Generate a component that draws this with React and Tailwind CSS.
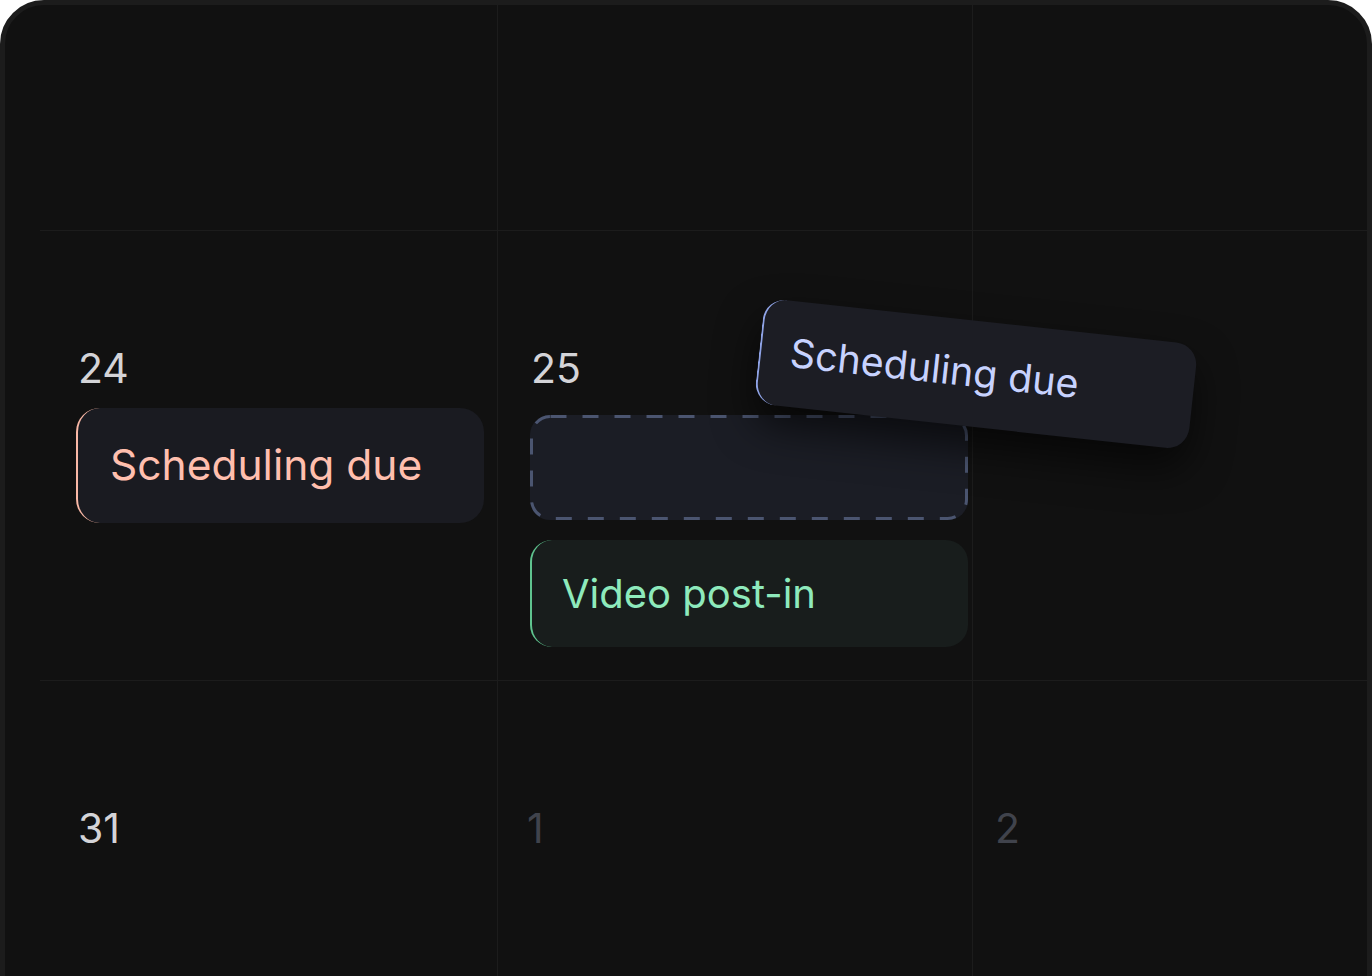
export default function App() {
  const font = { fontFamily: 'Inter, "Noto Sans", sans-serif' };
  return (
    <div className="relative h-[976px] w-[1372px] overflow-hidden bg-white" style={font}>
      <div className="h-[1040px] w-[1372px] rounded-[44px] border-[5px] border-[#1c1c1c] bg-[#111111] pl-[35px]">
        <div className="grid h-full grid-cols-[457px_475px_1fr] grid-rows-[225px_450px_1fr]">
          {/* row 1 */}
          <div />
          <div className="border-l border-[#1c1c1c]" />
          <div className="border-l border-[#1c1c1c]" />
          {/* row 2 */}
          <div className="border-t border-[#1c1c1c] pt-[116px]">
            <div className="pl-[38px] text-[41px] leading-[42px] text-[#d4d4d8]">24</div>
            <div className="ml-[36px] mt-[19px] flex h-[115px] w-[408px] items-center rounded-[24px] border-l-[2.5px] border-[#f9b8a6] bg-[#1a1b21] pb-[2px] pl-[32px] text-[42.5px] text-[#ffbfae]">
              Scheduling due
            </div>
          </div>
          <div className="border-l border-t border-[#1c1c1c] pt-[116px]">
            <div className="pl-[33px] text-[41px] leading-[42px] text-[#d4d4d8]">25</div>
            <div className="relative ml-[32px] mt-[26px] h-[105px] w-[438px] rounded-[20px] bg-[#1b1d25]">
              <svg className="absolute inset-0" width="438" height="105">
                <rect x="1.5" y="1.5" width="435" height="102" rx="19" ry="19" fill="none" stroke="#4b5570" strokeWidth="3" strokeDasharray="16 16" />
              </svg>
            </div>
            <div className="ml-[32px] mt-[20px] flex h-[107px] w-[438px] items-center rounded-[22px] border-l-[2.5px] border-[#5fc48f] bg-[#181d1c] pl-[30px] text-[40px] text-[#8eeabc]">
              Video post-in
            </div>
          </div>
          <div className="border-l border-t border-[#1c1c1c]" />
          {/* row 3 */}
          <div className="border-t border-[#1c1c1c] pt-[126px]">
            <div className="pl-[38px] text-[41px] leading-[42px] text-[#d4d4d8]">31</div>
          </div>
          <div className="border-l border-t border-[#1c1c1c] pt-[126px]">
            <div className="pl-[29px] text-[41px] leading-[42px] text-[#40434c]">1</div>
          </div>
          <div className="border-l border-t border-[#1c1c1c] pt-[126px]">
            <div className="pl-[22px] text-[41px] leading-[42px] text-[#40434c]">2</div>
          </div>
        </div>
      </div>
      <div className="absolute left-[758px] top-[321px] flex h-[106px] w-[436px] rotate-[6.2deg] items-center rounded-[22px] border-l-[2.5px] border-[#8fa3e6] bg-[#1c1d24] pl-[29px] text-[39.5px] text-[#c7d2fe] shadow-[0_20px_40px_rgba(0,0,0,0.6)]">
        Scheduling due
      </div>
    </div>
  );
}
